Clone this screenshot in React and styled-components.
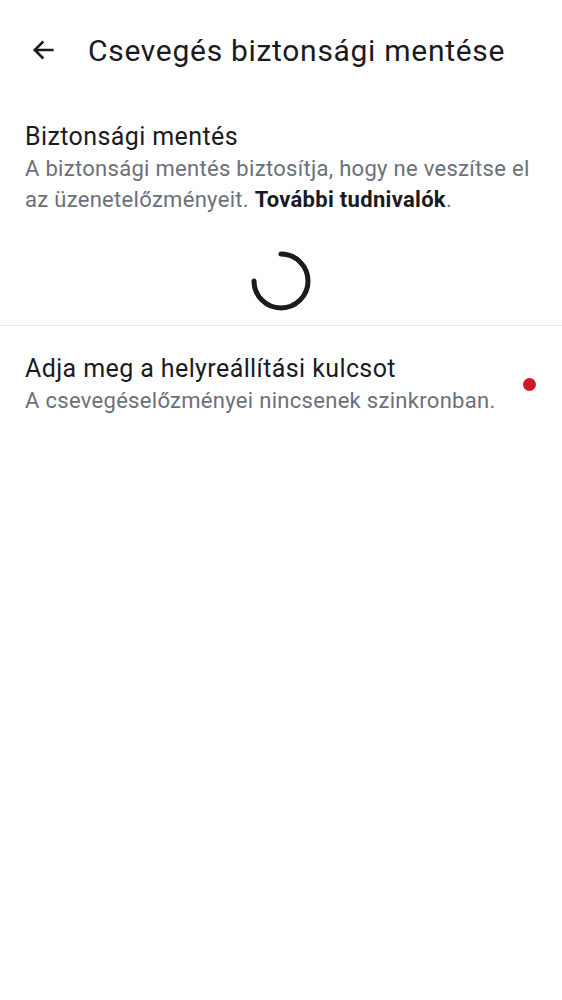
import styled, { createGlobalStyle } from 'styled-components';

const Global = createGlobalStyle`
  body {
    margin: 0;
    background: #ffffff;
    font-family: Roboto, "Noto Sans", sans-serif;
  }
`;

const Page = styled.div`
  width: 562px;
  min-height: 1000px;
  background: #ffffff;
`;

const TopBar = styled.header`
  display: flex;
  align-items: center;
  height: 100px;
  padding: 0 0 0 26px;
  gap: 28px;
`;

const BackButton = styled.button`
  display: flex;
  align-items: center;
  justify-content: center;
  width: 34px;
  height: 34px;
  padding: 0;
  border: none;
  background: transparent;
  color: #1b1b1f;
`;

const Title = styled.h1`
  margin: 0;
  font-size: 30px;
  font-weight: 400;
  color: #1b1b1f;
  letter-spacing: 0.7px;
`;

const Section = styled.section`
  padding: 20px 20px 0 25px;
`;

const ItemTitle = styled.div`
  font-size: 25px;
  line-height: 33px;
  color: #1b1b1f;
  letter-spacing: 0.4px;
`;

const ItemText = styled.div`
  font-size: 22px;
  line-height: 31px;
  color: #6b707a;
  letter-spacing: 0.3px;
  b {
    color: #1b1b1f;
    font-weight: 700;
  }
`;

const SpinnerWrap = styled.div`
  display: flex;
  justify-content: center;
  padding: 33px 0 11px;
`;

const Divider = styled.hr`
  margin: 0;
  border: none;
  border-top: 1px solid #e7e7ec;
`;

const Row = styled.div`
  display: flex;
  align-items: center;
  padding: 26px 26px 0 25px;
`;

const RowBody = styled.div`
  flex: 1;
`;

const Dot = styled.span`
  width: 13px;
  height: 13px;
  border-radius: 50%;
  background: #d3172a;
`;

function Spinner() {
  return (
    <svg width="66" height="66" viewBox="0 0 66 66">
      <path
        d="M33 6 A27 27 0 1 1 6 33"
        fill="none"
        stroke="#1b1b1f"
        strokeWidth="5"
        strokeLinecap="round"
      />
    </svg>
  );
}

export default function App() {
  return (
    <Page>
      <Global />
      <TopBar>
        <BackButton aria-label="Vissza">
          <svg width="28" height="28" viewBox="0 0 24 24" fill="none" stroke="currentColor" strokeWidth="2.2" strokeLinecap="square">
            <path d="M20 12H5M11.5 5.5L5 12l6.5 6.5" />
          </svg>
        </BackButton>
        <Title>Csevegés biztonsági mentése</Title>
      </TopBar>

      <Section>
        <ItemTitle>Biztonsági mentés</ItemTitle>
        <ItemText>
          A biztonsági mentés biztosítja, hogy ne veszítse el az üzenetelőzményeit. <b>További tudnivalók</b>.
        </ItemText>
      </Section>

      <SpinnerWrap>
        <Spinner />
      </SpinnerWrap>
      <Divider />

      <Row>
        <RowBody>
          <ItemTitle>Adja meg a helyreállítási kulcsot</ItemTitle>
          <ItemText>A csevegéselőzményei nincsenek szinkronban.</ItemText>
        </RowBody>
        <Dot />
      </Row>
    </Page>
  );
}
